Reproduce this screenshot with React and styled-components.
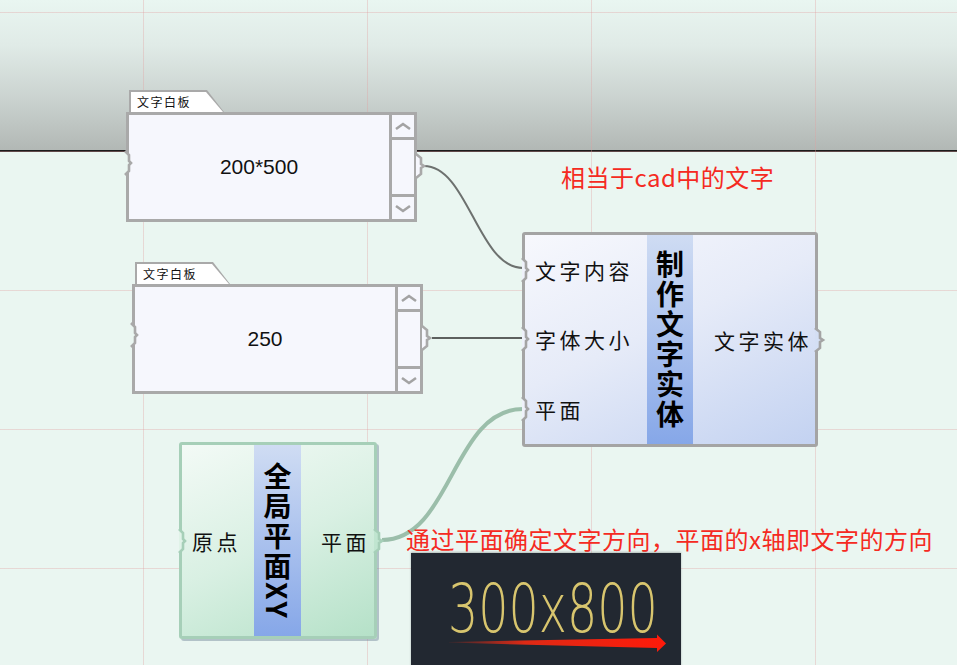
import React from 'react'
import styled, { createGlobalStyle } from 'styled-components'

const GlobalStyle = createGlobalStyle`
  html, body {
    margin: 0;
    padding: 0;
    background: #eaf6f1;
  }
  body {
    font-family: "Noto Sans CJK SC", "Noto Sans", sans-serif;
  }
`

const Canvas = styled.div`
  position: relative;
  width: 957px;
  height: 665px;
  overflow: hidden;
  background: #eaf6f1;
`

const TopShade = styled.div`
  height: 150px;
  background: linear-gradient(#e9f6f1 0%, #e0ebe7 30%, #cbd3d0 65%, #b2b8b5 100%);
  border-bottom: 2px solid #1c1c1c;
`

const Grid = styled.div`
  position: absolute;
  inset: 0;
  pointer-events: none;
  background-image:
    linear-gradient(to right, rgba(226, 160, 160, 0.35) 1px, transparent 1px),
    linear-gradient(to bottom, rgba(226, 160, 160, 0.35) 1px, transparent 1px);
  background-size: 224px 139px;
  background-position: 143px 0, 0 12px;
`

const Wires = styled.svg`
  position: absolute;
  left: 0;
  top: 0;
`

/* ---------- panel ---------- */

const PanelNode = styled.div`
  position: absolute;
  left: ${p => p.$x}px;
  top: ${p => p.$y}px;
  width: 291px;
  display: flex;
  flex-direction: column;
`

const TabFrame = styled.div`
  margin-left: 3px;
  width: 95px;
  height: 22px;
  box-sizing: border-box;
  padding: 2px 0 0 2px;
  background: #a9a9a9;
  clip-path: polygon(0 0, 78px 0, 95px 100%, 0 100%);
`

const Tab = styled.div`
  height: 100%;
  background: #fff;
  clip-path: polygon(0 0, 75px 0, 92px 100%, 0 100%);
  padding-left: 6px;
  font-size: 12px;
  line-height: 20px;
  letter-spacing: 1.5px;
  color: #111;
`

const PanelBody = styled.div`
  position: relative;
  height: 110px;
  box-sizing: border-box;
  border: 3px solid #a9a9a9;
  background: #f6f7fd;
  display: flex;
`

const PanelValue = styled.div`
  flex: 1;
  display: flex;
  align-items: center;
  justify-content: center;
  font-family: "Liberation Sans", Arial, sans-serif;
  font-size: 21px;
  color: #111;
`

const Scroll = styled.div`
  width: 22px;
  border-left: 3px solid #a9a9a9;
  display: flex;
  flex-direction: column;
`

const ScrollBtn = styled.div`
  height: 22px;
  display: flex;
  align-items: center;
  justify-content: center;
  border-${p => (p.$down ? 'top' : 'bottom')}: 3px solid #a9a9a9;
`

const ScrollMid = styled.div`
  flex: 1;
`

const Grip = styled.svg`
  position: absolute;
  ${p => (p.$side === 'left' ? `left: ${p.$off}px;` : `right: ${p.$off}px;`)}
  top: ${p => p.$top};
  ${p => (p.$center ? 'transform: translateY(-50%);' : '')}
  overflow: visible;
`

/* ---------- component ---------- */

const CompNode = styled.div`
  position: absolute;
  left: ${p => p.$x}px;
  top: ${p => p.$y}px;
  width: ${p => p.$w}px;
  height: ${p => p.$h}px;
  box-sizing: border-box;
  border: 3px solid ${p => p.$border};
  border-radius: 3px;
  background: ${p => p.$bg};
  box-shadow: ${p => p.$shadow || 'none'};
  display: grid;
  grid-template-columns: ${p => p.$cols};
`

const PortCol = styled.div`
  position: relative;
  display: flex;
  flex-direction: column;
  justify-content: space-around;
  align-items: ${p => (p.$right ? 'flex-end' : 'flex-start')};
  padding: ${p => (p.$right ? `0 ${p.$pad}px 0 0` : `0 0 0 ${p.$pad}px`)};
`

const PortLabel = styled.div`
  position: relative;
  font-size: 21px;
  line-height: 26px;
  letter-spacing: 3.5px;
  color: #111;
  white-space: nowrap;
`

const Strip = styled.div`
  background: linear-gradient(#cfdcf3, #86a7e8);
  display: flex;
  align-items: center;
  justify-content: center;
`

const StripText = styled.div`
  writing-mode: vertical-rl;
  text-orientation: mixed;
  font-size: 28px;
  font-weight: 700;
  line-height: 1;
  letter-spacing: 2px;
  color: #000;
`

/* ---------- notes ---------- */

const Note = styled.div`
  position: absolute;
  left: ${p => p.$x}px;
  top: ${p => p.$y}px;
  font-size: 24px;
  line-height: 30px;
  letter-spacing: 0.5px;
  color: #f52a22;
  white-space: nowrap;
`

const Shot = styled.div`
  position: absolute;
  left: 411px;
  top: 553px;
  width: 270px;
  height: 120px;
  background: #222831;
  box-shadow: 0 -1px 2px rgba(0, 0, 0, 0.25);
  padding: 22px 0 0 37px;
  box-sizing: border-box;
`

const ShotText = styled.div`
  font-family: "DejaVu Sans", sans-serif;
  font-weight: 200;
  font-size: 68px;
  line-height: 68px;
  color: #d8c56e;
  transform: scaleX(0.7);
  transform-origin: left top;
  white-space: nowrap;
`

const Arrow = styled.svg`
  position: absolute;
  left: 0;
  top: 0;
`

const Chevron = ({ down }) => (
  <svg width="16" height="9" viewBox="0 0 16 9">
    <polyline
      points={down ? '1,2 8,7 15,2' : '1,7 8,2 15,7'}
      fill="none"
      stroke="#a3a3a3"
      strokeWidth="2.6"
    />
  </svg>
)

const OutGrip = ({ color, fill, top, off = -11, center }) => (
  <Grip $side="right" $off={off} $top={top} $center={center} width="10" height="26" viewBox="0 0 10 26">
    <path d="M0 1 L5 5 L5 11 L8 13 L5 15 L5 21 L0 25 Z" fill={fill} />
    <path d="M0 1 L5 5 L5 11 L8 13 L5 15 L5 21 L0 25" fill="none" stroke={color} strokeWidth="2.6" />
  </Grip>
)

const InGrip = ({ color, fill, top, off = -4, center }) => (
  <Grip $side="left" $off={off} $top={top} $center={center} width="8" height="24" viewBox="0 0 8 24">
    <path d="M0 0 L4 4 L4 20 L0 24 Z" fill={fill} />
    <path d="M0 0 L4 4 L4 10 L6 12 L4 14 L4 20 L0 24" fill="none" stroke={color} strokeWidth="2.6" />
  </Grip>
)

function Panel({ x, y, value }) {
  return (
    <PanelNode $x={x} $y={y}>
      <TabFrame>
        <Tab>文字白板</Tab>
      </TabFrame>
      <PanelBody>
        <InGrip color="#a9a9a9" fill="#eaf6f1" top="36px" off={-4} />
        <PanelValue>{value}</PanelValue>
        <Scroll>
          <ScrollBtn>
            <Chevron />
          </ScrollBtn>
          <ScrollMid />
          <ScrollBtn $down>
            <Chevron down />
          </ScrollBtn>
        </Scroll>
        <OutGrip color="#a9a9a9" fill="#f6f7fd" top="38px" off={-12} />
      </PanelBody>
    </PanelNode>
  )
}

function Port({ children, side, color, fill, pad }) {
  return (
    <PortLabel>
      {side === 'in' && <InGrip color={color} fill={fill} top="50%" off={-pad - 3} center />}
      {children}
      {side === 'out' && <OutGrip color={color} fill={fill} top="50%" off={-pad - 10} center />}
    </PortLabel>
  )
}

export default function App() {
  return (
    <Canvas>
      <GlobalStyle />
      <TopShade />
      <Grid />

      <Wires width="957" height="665" viewBox="0 0 957 665">
        <path d="M424 166 C468 166, 478 268, 523 268" fill="none" stroke="#6d716f" strokeWidth="2" />
        <path d="M432 338 L523 338" fill="none" stroke="#5d605e" strokeWidth="2" />
        <path d="M382 540 C452 540, 452 409, 523 409" fill="none" stroke="#9bbeaa" strokeWidth="4" />
      </Wires>

      <Panel x={126} y={90} value="200*500" />
      <Panel x={132} y={262} value="250" />

      <CompNode
        $x={522}
        $y={232}
        $w={296}
        $h={215}
        $border="#a4a4a4"
        $bg="linear-gradient(155deg, #f7f8fd 0%, #e6ebf8 45%, #c3d2f1 100%)"
        $cols="122px 46px 1fr"
      >
        <PortCol $pad={10}>
          <Port side="in" color="#a4a4a4" fill="#eef1fa" pad={10}>文字内容</Port>
          <Port side="in" color="#a4a4a4" fill="#eef1fa" pad={10}>字体大小</Port>
          <Port side="in" color="#a4a4a4" fill="#eef1fa" pad={10}>平面</Port>
        </PortCol>
        <Strip>
          <StripText>制作文字实体</StripText>
        </Strip>
        <PortCol $right $pad={3}>
          <Port side="out" color="#a4a4a4" fill="#d4dff4" pad={3}>文字实体</Port>
        </PortCol>
      </CompNode>

      <CompNode
        $x={179}
        $y={442}
        $w={198}
        $h={197}
        $border="#a6cfb8"
        $bg="linear-gradient(155deg, #f3faf6 0%, #d9f0e3 50%, #b5e1c8 100%)"
        $shadow="2px 2px 0 rgba(110, 130, 150, 0.45)"
        $cols="72px 47px 1fr"
      >
        <PortCol $pad={10}>
          <Port side="in" color="#a6cfb8" fill="#e0f3e8" pad={10}>原点</Port>
        </PortCol>
        <Strip>
          <StripText>全局平面XY</StripText>
        </Strip>
        <PortCol $right $pad={4}>
          <Port side="out" color="#a6cfb8" fill="#c0e5d0" pad={4}>平面</Port>
        </PortCol>
      </CompNode>

      <Note $x={561} $y={162}>相当于cad中的文字</Note>
      <Note $x={406} $y={524}>通过平面确定文字方向，平面的x轴即文字的方向</Note>

      <Shot>
        <ShotText>300x800</ShotText>
        <Arrow width="270" height="120" viewBox="0 0 270 120">
          <defs>
            <linearGradient id="arrowFade" x1="0" x2="1" y1="0" y2="0">
              <stop offset="0" stopColor="#ff2a10" stopOpacity="0.1" />
              <stop offset="0.35" stopColor="#ff2a10" stopOpacity="0.85" />
              <stop offset="1" stopColor="#ff1a0a" />
            </linearGradient>
          </defs>
          <path d="M38 89 L246 85 L246 81.5 L255 90.5 L246 99 L246 95 L38 89.6 Z" fill="url(#arrowFade)" />
        </Arrow>
      </Shot>
    </Canvas>
  )
}
